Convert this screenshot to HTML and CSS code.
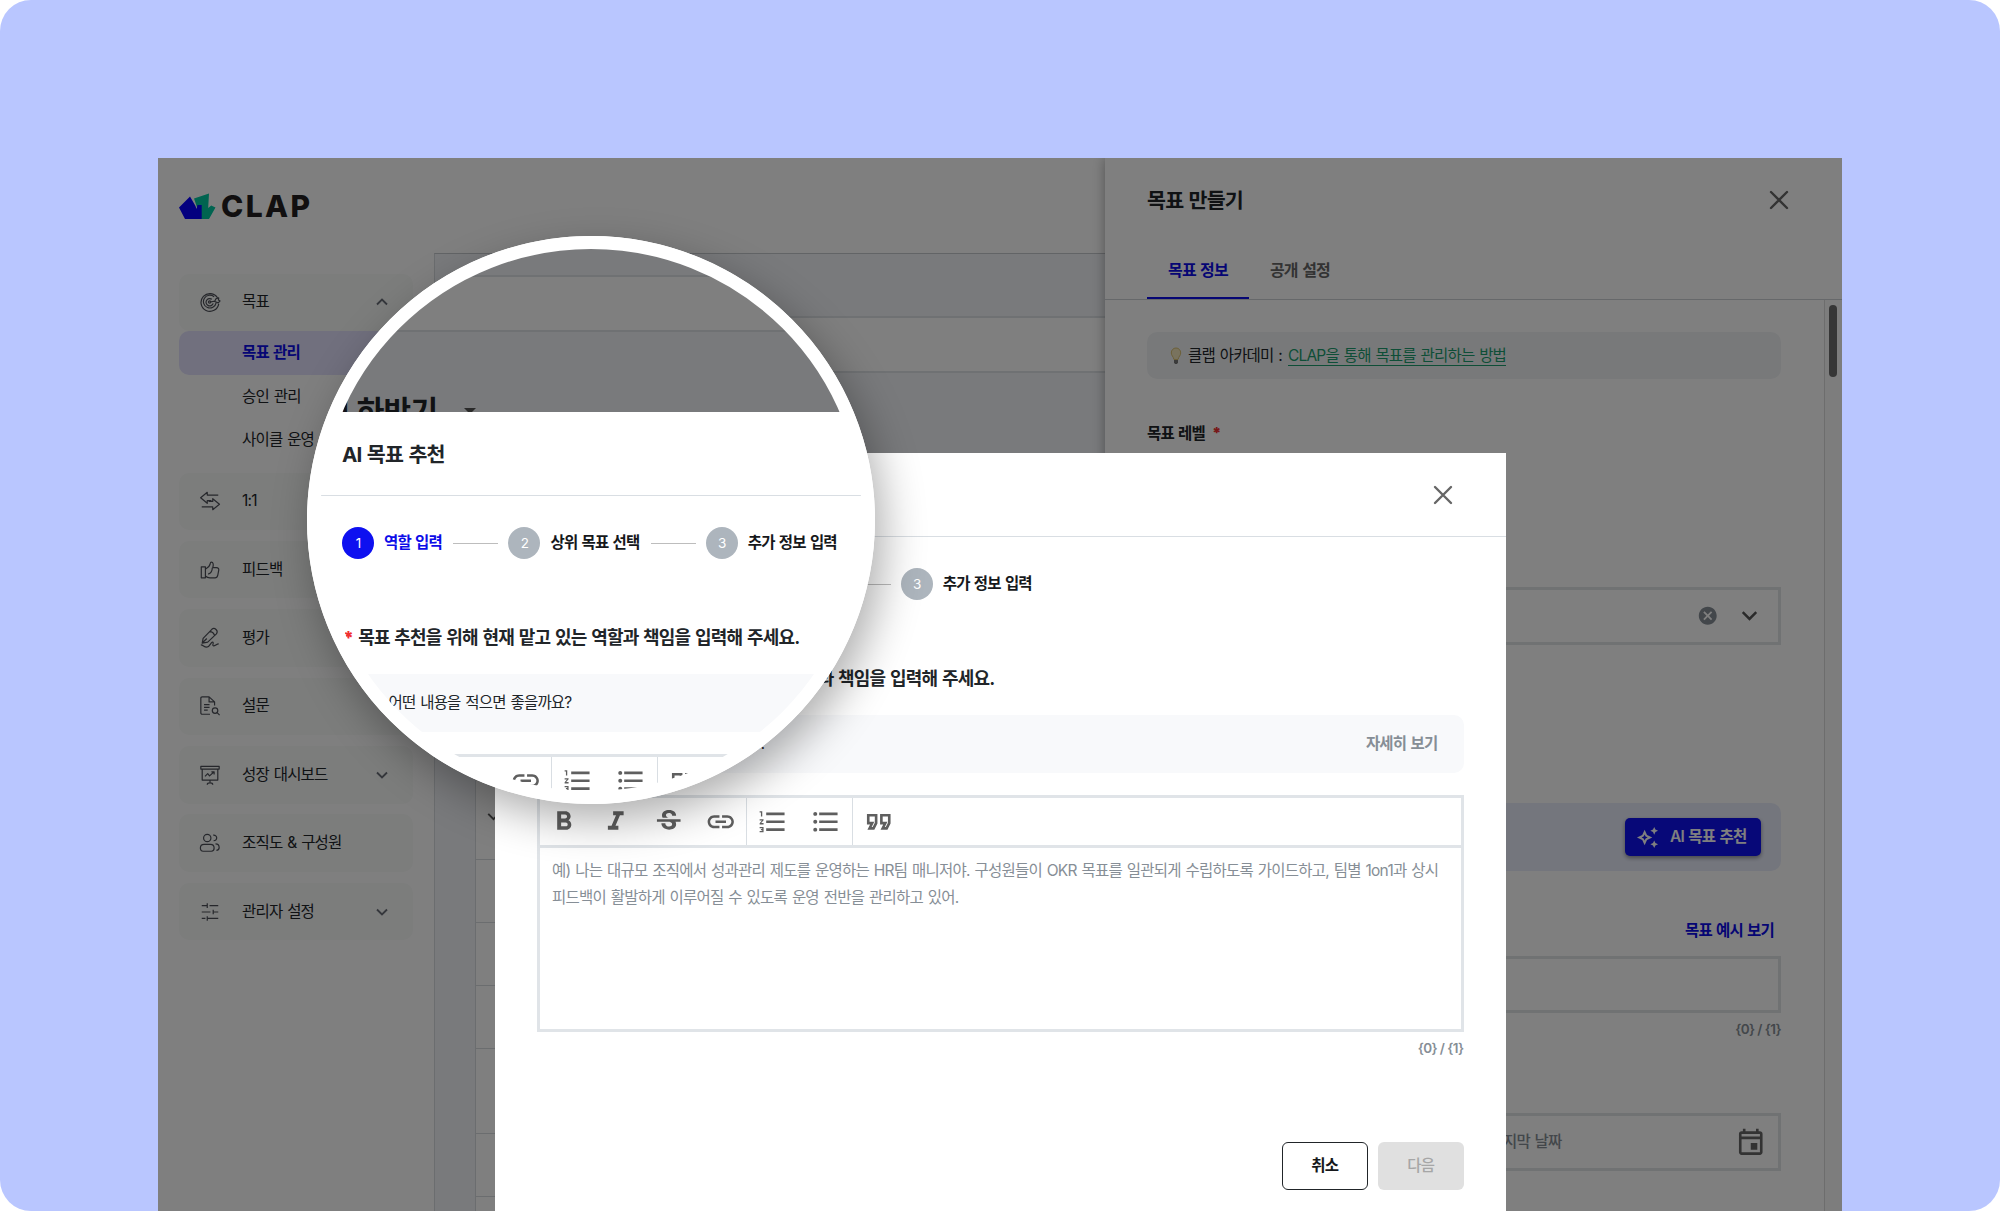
FILE: index.html
```html
<!DOCTYPE html>
<html lang="ko">
  <head>
    <meta charset="UTF-8" />
    <meta name="viewport" content="width=device-width, initial-scale=1.0" />
    <title>CLAP - AI 목표 추천</title>
    <link rel="stylesheet" href="styles.css" />
  </head>
  <body>
    <!-- shared icons -->
    <svg class="sprite" width="0" height="0">
      <symbol id="chevron" viewBox="0 0 24 24">
        <path d="M6 9l6 6 6-6" fill="none" stroke="currentColor" stroke-width="2.2" />
      </symbol>
      <symbol id="close" viewBox="0 0 24 24">
        <path d="M4 4l16 16M20 4L4 20" fill="none" stroke="currentColor" stroke-width="2.4" stroke-linecap="round" />
      </symbol>
      <symbol id="bold" viewBox="0 0 24 24"><path d="M15.6 10.79c.97-.67 1.65-1.77 1.65-2.79 0-2.26-1.75-4-4-4H7v14h7.04c2.09 0 3.71-1.7 3.71-3.79 0-1.52-.86-2.82-2.15-3.42zM10 6.5h3c.83 0 1.5.67 1.5 1.5s-.67 1.5-1.5 1.5h-3v-3zm3.5 9H10v-3h3.5c.83 0 1.5.67 1.5 1.5s-.67 1.5-1.5 1.5z" /></symbol>
      <symbol id="italic" viewBox="0 0 24 24"><path d="M10 4v3h2.21l-3.42 8H6v3h8v-3h-2.21l3.42-8H18V4z" /></symbol>
      <symbol id="strike" viewBox="0 0 24 24"><path d="M6.85 7.08C6.85 4.37 9.45 3 12.24 3c1.64 0 3 .49 3.9 1.28.77.65 1.46 1.73 1.46 3.24h-3.01c0-.31-.05-.59-.15-.85-.29-.86-1.2-1.28-2.25-1.28-1.86 0-2.34 1.02-2.34 1.7 0 .48.25.88.74 1.21.38.25.77.48 1.41.7H7.39c-.21-.34-.54-.89-.54-1.92zM21 12v-2H3v2h9.62c1.15.45 1.96.75 1.96 1.97 0 1-.81 1.67-2.28 1.67-1.54 0-2.93-.54-2.93-2.51H6.4c0 .55.08 1.13.24 1.58.81 2.29 3.29 3.3 5.67 3.3 2.27 0 5.3-.89 5.3-4.05 0-.3-.01-1.16-.48-1.94H21V12z" /></symbol>
      <symbol id="link" viewBox="0 0 24 24"><path d="M3.9 12c0-1.71 1.39-3.1 3.1-3.1h4V7H7c-2.76 0-5 2.24-5 5s2.24 5 5 5h4v-1.9H7c-1.71 0-3.1-1.39-3.1-3.1zM8 13h8v-2H8v2zm9-6h-4v1.9h4c1.71 0 3.1 1.39 3.1 3.1s-1.39 3.1-3.1 3.1h-4V17h4c2.76 0 5-2.24 5-5s-2.24-5-5-5z" /></symbol>
      <symbol id="ordered" viewBox="0 0 24 24"><path d="M2 17h2v.5H3v1h1v.5H2v1h3v-4H2v1zm1-9h1V4H2v1h1v3zm-1 3h1.8L2 13.1v.9h3v-1H3.2L5 10.9V10H2v1zm5-6v2h14V5H7zm0 14h14v-2H7v2zm0-6h14v-2H7v2z" /></symbol>
      <symbol id="bullets" viewBox="0 0 24 24"><path d="M4 10.5c-.83 0-1.5.67-1.5 1.5s.67 1.5 1.5 1.5 1.5-.67 1.5-1.5-.67-1.5-1.5-1.5zm0-6c-.83 0-1.5.67-1.5 1.5S3.17 7.5 4 7.5 5.5 6.83 5.5 6 4.83 4.5 4 4.5zm0 12c-.83 0-1.5.68-1.5 1.5s.68 1.5 1.5 1.5 1.5-.68 1.5-1.5-.67-1.5-1.5-1.5zM7 19h14v-2H7v2zm0-6h14v-2H7v2zm0-8v2h14V5H7z" /></symbol>
      <symbol id="quote" viewBox="0 0 24 24"><path d="M18.62 18h-5.24l2-4H13V6h8v7.24L18.62 18zm-2-2h.76L19 12.76V8h-4v4h3.62l-2 4zm-8 2H3.38l2-4H3V6h8v7.24L8.62 18zm-2-2h.76L9 12.76V8H5v4h3.62l-2 4z" /></symbol>
    </svg>

    <div class="stage">
      <div class="screen">
        <nav class="sidebar">
          <div class="logo">
            <svg width="37" height="27" viewBox="0 0 37 27">
              <path fill="#00c8a0" d="M15 5.5L30 .5l-.8 14.5 3-2.5 4.3 2L30 26H22z" />
              <path fill="#0800ff" d="M0 14.5L11 3.5l5.5 9.5 1 3 1-4h4.2v14H6z" />
            </svg>
            <span>CLAP</span>
          </div>

          <div class="menu menu-open">
            <svg class="icon" viewBox="0 0 24 24">
              <path d="M20.3 7.6A9.7 9.7 0 1 0 21.5 14M16.5 6.3A7 7 0 1 0 18.7 13M14 9A4 4 0 1 0 15.5 13.5M11.7 12L18 11M17 11.5l1.5-3 3-1-.3 2.3 1.8 1-2 2.2z" />
              <circle cx="11.6" cy="12" r="1.3" />
            </svg>
            <span>목표</span>
            <svg class="arrow up"><use href="#chevron" /></svg>
          </div>
          <ul class="submenu">
            <li class="active">목표 관리</li>
            <li>승인 관리</li>
            <li>사이클 운영</li>
          </ul>

          <div class="menu">
            <svg class="icon" viewBox="0 0 24 24">
              <path d="M21 5.5H9V2.5L1.8 8.5 9 14.5V11.5h4.5M3 18.5h12v3L22.3 15.5 15 9.5v3h-4.5" />
            </svg>
            <span>1:1</span>
          </div>
          <div class="menu">
            <svg class="icon" viewBox="0 0 24 24">
              <path d="M2.5 8.5h4.5v12H2.5zM7 18.5c2 2 3 2 5 2h5.5c2 0 2.5-1 3-3l1-5c.4-2-.5-3-2.5-3h-4c1-3 .7-6-1.5-6-1.3 0-1.2 1-1.5 2.5C11.3 9 9 10 7 11M10 16.5c3-1 4.5-3.5 4.5-7" />
            </svg>
            <span>피드백</span>
          </div>
          <div class="menu">
            <svg class="icon" viewBox="0 0 24 24">
              <path d="M3.5 17.500l1-5L14 2.500c3-2.500 7.500 1.500 5 5L9.500 16.500zM11.500 5c3 0 5 2 5.500 5M3.500 17.500l5-5M2 19.500c3 0 3 2.500 6.500 2.500s4-5 6-5.500c2.500 0-.5 3.500 1 4 2 .5 3.500-2 6-2" />
            </svg>
            <span>평가</span>
          </div>
          <div class="menu">
            <svg class="icon" viewBox="0 0 24 24">
              <path d="M12 21H3.5c-1 0-1.5-.5-1.5-1.5V3.5C2 2.5 2.5 2 3.5 2H11l6 5.5v4M11 2v5.5h6M5.5 10.5h6M5.5 13.5h6M5.5 16.5h4" />
              <circle cx="17.5" cy="17" r="3" />
              <path d="M19.7 19.2L22.5 22" />
            </svg>
            <span>설문</span>
          </div>
          <div class="menu">
            <svg class="icon" viewBox="0 0 24 24">
              <path d="M2 2.5h20v3H2zM3.5 5.5v12h17v-12M12 17.5v3M9 22.5c0-1.5 1-2 3-2s3 .5 3 2M6.5 13.5l3-3 2 2.5 5-4.5M13.5 8.5h3v3" />
            </svg>
            <span>성장 대시보드</span>
            <svg class="arrow"><use href="#chevron" /></svg>
          </div>
          <div class="menu">
            <svg class="icon" viewBox="0 0 24 24">
              <circle cx="9" cy="6.5" r="4" />
              <path d="M5.5 13.5h7c2.5 0 4 2 4 4s-1 3.5-3 3.5h-9c-2 0-3-1.5-3-3.5s1.5-4 4-4zM15.5 3.5c5-.5 5 6 .5 6M18 13c3 0 4 2 4 4s-1 3-3 3" />
            </svg>
            <span>조직도 &amp; 구성원</span>
          </div>
          <div class="menu">
            <svg class="icon" viewBox="0 0 24 24">
              <path d="M3 5h6M9 2.5v5M11.5 5H21M3 12h9.5M21 12h-5.5M15.5 9.5v5M3 19h4M9 16.5v5M9 19h12" />
            </svg>
            <span>관리자 설정</span>
            <svg class="arrow"><use href="#chevron" /></svg>
          </div>
        </nav>

        <main class="main">
          <div class="strip"></div>
          <div class="toolbar"></div>
          <div class="table">
            <div class="row first"><svg class="arrow"><use href="#chevron" /></svg></div>
            <div class="row"></div>
            <div class="row"></div>
            <div class="row"></div>
            <div class="row tall"></div>
            <div class="row"></div>
            <div class="row"></div>
          </div>
        </main>

        <!-- goal drawer -->
        <aside class="drawer">
          <div class="drawer-head">
            <h2>목표 만들기</h2>
            <svg class="close"><use href="#close" /></svg>
          </div>
          <div class="tabs">
            <span class="tab on">목표 정보</span>
            <span class="tab">공개 설정</span>
          </div>
          <div class="drawer-body">
            <div class="form">
              <div class="notice">
                <svg width="12" height="18" viewBox="0 0 12 18">
                  <path d="M6 1a4.7 4.7 0 0 0-4.7 5c0 2.5 2 3.5 2.7 6.5h4c.7-3 2.7-4 2.7-6.5A4.7 4.7 0 0 0 6 1z" fill="#f2e6bd" stroke="#d9c070" />
                  <path d="M4 13h4v2.5L7 17H5l-1-1.5z" fill="#777" />
                </svg>
                <span>클랩 아카데미 :</span>
                <a>CLAP을 통해 목표를 관리하는 방법</a>
              </div>
              <div class="label">목표 레벨 <b class="req">*</b></div>
              <div class="field select">
                <svg class="clear" viewBox="0 0 24 24"><path d="M12 2C6.47 2 2 6.47 2 12s4.47 10 10 10 10-4.47 10-10S17.53 2 12 2zm5 13.59L15.59 17 12 13.41 8.41 17 7 15.59 10.59 12 7 8.41 8.41 7 12 10.59 15.59 7 17 8.41 13.41 12 17 15.59z" /></svg>
                <svg class="arrow"><use href="#chevron" /></svg>
              </div>
              <div class="ai-banner">
                <button class="ai-btn">
                  <svg width="23" height="23" viewBox="0 0 24 24"><path d="M19 9l1.25-2.75L23 5l-2.75-1.25L19 1l-1.25 2.75L15 5l2.75 1.25L19 9zm0 6l-1.25 2.75L15 19l2.75 1.25L19 23l1.25-2.75L23 19l-2.75-1.25L19 15zm-7.5-5.5L9 4 6.5 9.5 1 12l5.5 2.5L9 20l2.5-5.5L17 12l-5.5-2.5zm-1.51 3.49L9 15.17l-.99-2.18L5.83 12l2.18-.99L9 8.83l.99 2.18 2.18.99-2.18.99z" /></svg>
                  AI 목표 추천
                </button>
              </div>
              <div class="example">목표 예시 보기</div>
              <div class="field"></div>
              <div class="counter">{0} / {1}</div>
              <div class="dates">
                <div class="field"></div>
                <div class="field date">
                  <span>마지막 날짜</span>
                  <svg viewBox="0 0 24 24"><path d="M19 4h-1V2h-2v2H8V2H6v2H5c-1.11 0-1.99.9-1.99 2L3 20c0 1.1.89 2 2 2h14c1.1 0 2-.9 2-2V6c0-1.1-.9-2-2-2zm0 16H5V10h14v10zm0-12H5V6h14v2zm-7 5h5v5h-5z" /></svg>
                </div>
              </div>
            </div>
            <div class="scroll"><div class="thumb"></div></div>
          </div>
        </aside>

        <div class="backdrop"></div>

        <!-- AI modal -->
        <section class="modal">
          <div class="modal-head">
            <h2>AI 목표 추천</h2>
            <svg class="close"><use href="#close" /></svg>
          </div>
          <div class="modal-body">
            <div class="steps">
              <span class="num on">1</span><span class="step on">역할 입력</span>
              <i class="line"></i>
              <span class="num">2</span><span class="step">상위 목표 선택</span>
              <i class="line"></i>
              <span class="num">3</span><span class="step">추가 정보 입력</span>
            </div>
            <div class="question"><b class="req">*</b>목표 추천을 위해 현재 맡고 있는 역할과 책임을 입력해 주세요.</div>
            <div class="hint">
              <span>어떤 내용을 적으면 좋을까요?</span>
              <span class="more">자세히 보기</span>
            </div>
            <div class="editor">
              <div class="tools">
                <div class="group">
                  <svg><use href="#bold" /></svg>
                  <svg><use href="#italic" /></svg>
                  <svg><use href="#strike" /></svg>
                  <svg><use href="#link" /></svg>
                </div>
                <div class="group">
                  <svg><use href="#ordered" /></svg>
                  <svg><use href="#bullets" /></svg>
                </div>
                <div class="group">
                  <svg><use href="#quote" /></svg>
                </div>
              </div>
              <div class="text">
                예) 나는 대규모 조직에서 성과관리 제도를 운영하는 HR팀 매니저야. 구성원들이 OKR 목표를 일관되게 수립하도록 가이드하고, 팀별 1on1과 상시<br />
                피드백이 활발하게 이루어질 수 있도록 운영 전반을 관리하고 있어.
              </div>
            </div>
            <div class="counter">{0} / {1}</div>
            <div class="actions">
              <button class="btn">취소</button>
              <button class="btn disabled">다음</button>
            </div>
          </div>
        </section>
      </div>

      <!-- magnifier over the modal's top left corner -->
      <div class="lens">
        <div class="lens-view">
          <div class="screen lens-screen">
            <div class="main">
              <div class="strip"></div>
              <div class="toolbar"></div>
              <h1 class="cycle">25년 하반기 <i class="caret"></i></h1>
            </div>
            <div class="backdrop"></div>
            <section class="modal">
              <div class="modal-head">
                <h2>AI 목표 추천</h2>
              </div>
              <div class="modal-body">
                <div class="steps">
                  <span class="num on">1</span><span class="step on">역할 입력</span>
                  <i class="line"></i>
                  <span class="num">2</span><span class="step">상위 목표 선택</span>
                  <i class="line"></i>
                  <span class="num">3</span><span class="step">추가 정보 입력</span>
                </div>
                <div class="question"><b class="req">*</b>목표 추천을 위해 현재 맡고 있는 역할과 책임을 입력해 주세요.</div>
                <div class="hint"><span>어떤 내용을 적으면 좋을까요?</span></div>
                <div class="editor">
                  <div class="tools">
                    <div class="group">
                      <svg></svg>
                      <svg></svg>
                      <svg></svg>
                      <svg><use href="#link" /></svg>
                    </div>
                    <div class="group">
                      <svg><use href="#ordered" /></svg>
                      <svg><use href="#bullets" /></svg>
                    </div>
                    <div class="group">
                      <svg><use href="#quote" /></svg>
                    </div>
                  </div>
                </div>
              </div>
            </section>
          </div>
        </div>
        <div class="ring"></div>
      </div>
    </div>
  </body>
</html>
```

FILE: styles.css
```css
* {
  box-sizing: border-box;
}

body {
  margin: 0;
  background: #fff;
  color: #212529;
  font-family: Inter, "Noto Sans CJK KR", sans-serif;
  font-size: 15.5px;
  line-height: 24px;
  letter-spacing: -0.052em;
  word-spacing: 0.08em;
  overflow: hidden;
}

h1,
h2,
ul {
  margin: 0;
  padding: 0;
  list-style: none;
}

button {
  font: inherit;
  letter-spacing: inherit;
  word-spacing: inherit;
  border: 0;
  padding: 0;
}

.sprite {
  position: absolute;
}

.stage {
  position: relative;
  width: 2000px;
  height: 1211px;
  padding: 158px 158px 0;
  background: #b9c6ff;
  border-radius: 31px;
  overflow: hidden;
}

.screen {
  position: relative;
  display: flex;
  width: 1684px;
  height: 1053px;
  background: #fff;
  overflow: hidden;
}

/* sidebar */
.sidebar {
  width: 276px;
  padding: 34px 21px 0;
}

.logo {
  display: flex;
  align-items: center;
  gap: 5px;
  height: 27px;
  margin-bottom: 54.5px;
  padding-top: 1px;
  font-family: Inter, sans-serif;
  font-size: 30px;
  font-weight: 800;
  letter-spacing: 2.4px;
  color: #231f20;
}

.menu {
  display: flex;
  align-items: center;
  height: 57.5px;
  margin-bottom: 10.9px;
  padding: 0 21px 0 20px;
  border-radius: 10px;
  background: #f8faf9;
}

.menu-open {
  margin-bottom: 0;
}

.menu span {
  margin-left: 21px;
}

.icon {
  width: 22px;
  height: 22px;
  fill: none;
  stroke: #4c4f57;
  stroke-width: 1.3;
  stroke-linejoin: round;
}

.arrow {
  width: 21px;
  height: 21px;
  color: #6b6f78;
}

.menu .arrow {
  width: 20px;
  height: 20px;
  margin-left: auto;
}

.arrow.up {
  transform: rotate(180deg);
}

.submenu {
  padding-bottom: 11px;
}

.submenu li {
  height: 43.5px;
  padding-left: 63px;
  line-height: 43px;
}

.submenu .active {
  border-radius: 10px;
  background: #e2e1fc;
  color: #0c0ce8;
  font-weight: 700;
}

/* goal list behind the drawer */
.main {
  flex: 1;
  margin-top: 95px;
  border-left: 1px solid #d6dade;
  border-top: 1px solid #c4c8cc;
  background: #f3f5f9;
}

.strip {
  height: 62px;
}

.toolbar {
  height: 57px;
  background: #fff;
  border-top: 2px solid #dee2e6;
  border-bottom: 2px solid #dee2e6;
}

.cycle {
  display: flex;
  align-items: center;
  height: 40px;
  margin-top: 59px;
  padding-left: 46px;
  font-size: 30px;
  font-weight: 700;
}

.caret {
  margin-left: 27px;
  border: 6.5px solid transparent;
  border-top-color: #555;
  border-bottom: 0;
}

.table {
  margin: 403px 0 0 40px;
  border-left: 1px solid #d6dade;
  background: #fff;
}

.row {
  height: 63px;
  border-bottom: 1px solid #d6dade;
}

.row.first {
  height: 84px;
  padding: 30px 0 0 7px;
}

.row.first .arrow {
  color: #555;
}

.row.tall {
  height: 84.5px;
}

/* drawer */
.drawer {
  position: absolute;
  top: 0;
  right: 0;
  width: 737px;
  height: 1053px;
  background: #fff;
  box-shadow: 0 0 12px rgba(0, 0, 0, 0.35);
}

.drawer-head {
  display: flex;
  align-items: center;
  justify-content: space-between;
  height: 84px;
  padding: 0 51px 0 42px;
}

.drawer h2,
.modal h2 {
  padding-top: 2px;
  font-size: 20.6px;
  font-weight: 700;
}

.close {
  width: 24px;
  height: 24px;
  color: #666;
}

.tabs {
  display: flex;
  height: 58px;
  padding-left: 42px;
  border-bottom: 1px solid #ccd0d4;
  font-size: 16px;
  font-weight: 600;
}

.tab {
  padding: 16px 21px 0;
  color: #666;
}

.tab.on {
  color: #0c0ce8;
  border-bottom: 2px solid #0c0ce8;
  font-weight: 700;
}

.drawer-body {
  display: flex;
  height: 911px;
}

.form {
  flex: 1;
  padding: 32px 43px 0 42px;
}

.notice {
  display: flex;
  align-items: center;
  height: 47px;
  padding-left: 23px;
  border-radius: 10px;
  background: #f1f3f5;
}

.notice span {
  margin: 0 6px;
}

.notice a {
  color: #1c9d6e;
  border-bottom: 1px solid #1c9d6e;
  line-height: 19px;
}

.label {
  margin-top: 43px;
  font-weight: 700;
}

.req {
  color: #f03030;
}

.label .req {
  margin-left: 3px;
}

.field {
  height: 57.5px;
  border: 3px solid #e0e4e7;
  background: #fff;
}

.select {
  display: flex;
  align-items: center;
  justify-content: flex-end;
  gap: 18px;
  margin-top: 141px;
  padding-right: 15px;
}

.select .arrow {
  width: 27px;
  height: 27px;
  color: #555;
}

.select .clear {
  width: 21.5px;
  height: 21.5px;
  fill: #868e96;
}

.ai-banner {
  display: flex;
  align-items: center;
  justify-content: flex-end;
  height: 68px;
  margin-top: 158.5px;
  padding-right: 20.5px;
  border-radius: 10px;
  background: #e9edfb;
}

.ai-btn {
  display: flex;
  align-items: center;
  gap: 11px;
  height: 37.5px;
  padding: 0 14px 0 11px;
  border-radius: 5px;
  background: #0e10f0;
  color: #fff;
  fill: #fff;
  font-weight: 600;
  box-shadow: 0 2px 4px rgba(0, 0, 0, 0.4);
}

.example {
  margin: 48px 7px 12.5px;
  text-align: right;
  font-weight: 700;
  color: #0c0ce8;
}

.counter {
  height: 20px;
  margin-top: 6px;
  text-align: right;
  font-size: 13.5px;
  line-height: 20px;
  letter-spacing: -0.045em;
  word-spacing: 0;
  font-weight: 600;
  color: #868e96;
}

.dates {
  display: grid;
  grid-template-columns: 1fr 1fr;
  gap: 17px;
  margin-top: 74px;
}

.date {
  display: flex;
  align-items: center;
  justify-content: space-between;
  padding: 0 12px 0 14px;
  color: #868e96;
  font-weight: 500;
}

.date svg {
  width: 31.5px;
  height: 31.5px;
  fill: #666;
}

.scroll {
  width: 18px;
  padding: 5px 4px;
  border-left: 1px solid #dadada;
  background: #fafafa;
}

.thumb {
  width: 8px;
  height: 72px;
  border-radius: 4px;
  background: #6c6c6c;
}

.backdrop {
  position: absolute;
  inset: 0;
  background: rgba(0, 0, 0, 0.5);
}

/* modal */
.modal {
  position: absolute;
  left: 337px;
  top: 295px;
  width: 1010.5px;
  height: 780px;
  background: #fff;
}

.modal-head {
  display: flex;
  align-items: center;
  justify-content: space-between;
  height: 84px;
  padding: 0 51px 0 42px;
  border-bottom: 1px solid #d9dee3;
}

.modal-body {
  padding: 31px 42px 0;
}

.steps {
  display: flex;
  align-items: center;
  height: 32px;
  font-weight: 700;
  color: #16181b;
}

.num {
  width: 32px;
  height: 32px;
  margin-right: 10px;
  border-radius: 50%;
  background: #adb5bd;
  color: #fff;
  font-size: 13.5px;
  font-weight: 400;
  line-height: 32px;
  text-align: center;
}

.num.on {
  background: #0e10f0;
}

.step.on {
  color: #0c0ce8;
}

.line {
  width: 45px;
  height: 1.5px;
  margin: 1px 10px 0 11.5px;
  background: #bdbdbd;
}

.question {
  height: 30px;
  margin-top: 64px;
  padding-left: 1px;
  font-size: 18px;
  line-height: 30px;
  font-weight: 700;
}

.question .req {
  margin-right: 5px;
}

.hint {
  display: flex;
  align-items: center;
  justify-content: space-between;
  height: 57.5px;
  margin-top: 21px;
  padding: 0 26px 0 46.5px;
  border-radius: 10px;
  background: #f8f9fb;
}

.more {
  color: #868e96;
  font-weight: 600;
}

.editor {
  height: 236.5px;
  margin-top: 22.5px;
  border: 3px solid #e0e4e8;
}

.tools {
  display: flex;
  height: 50px;
  border-bottom: 3px solid #e0e4e8;
}

.group {
  display: flex;
  align-items: center;
  gap: 21px;
  padding: 0 11px 0 10px;
  border-right: 1px solid #d9dee3;
}

.group:first-child {
  padding: 0 9.5px 0 7.5px;
}

.group:last-child {
  border: 0;
}

.group svg {
  width: 31.5px;
  height: 31.5px;
  fill: #5f5f5f;
}

.text {
  padding: 10px 12px;
  line-height: 26.5px;
  letter-spacing: -0.05em;
  color: #868e96;
  white-space: nowrap;
}

.actions {
  display: flex;
  justify-content: flex-end;
  gap: 10.5px;
  margin-top: 84px;
}

.btn {
  width: 85.5px;
  height: 48px;
  border: 1px solid #212529;
  border-radius: 6px;
  background: #fff;
  color: #16181b;
  font-weight: 700;
}

.btn.disabled {
  border: 0;
  background: #e0e0e0;
  color: #a6a6a6;
  font-weight: 500;
}

/* magnifier */
.lens {
  position: absolute;
  left: 307px;
  top: 235.5px;
  width: 568px;
  height: 568px;
  padding: 6px;
  border-radius: 50%;
  background: #fff;
  box-shadow: 8px 16px 44px rgba(0, 0, 0, 0.32);
}

.lens-view {
  height: 556px;
  border-radius: 50%;
  overflow: hidden;
}

.lens-screen {
  left: -350px;
  top: -124.5px;
}

.lens-screen .main {
  margin-left: 276px;
}

.ring {
  position: absolute;
  inset: 0;
  border: 13px solid #fff;
  border-radius: 50%;
}
```
